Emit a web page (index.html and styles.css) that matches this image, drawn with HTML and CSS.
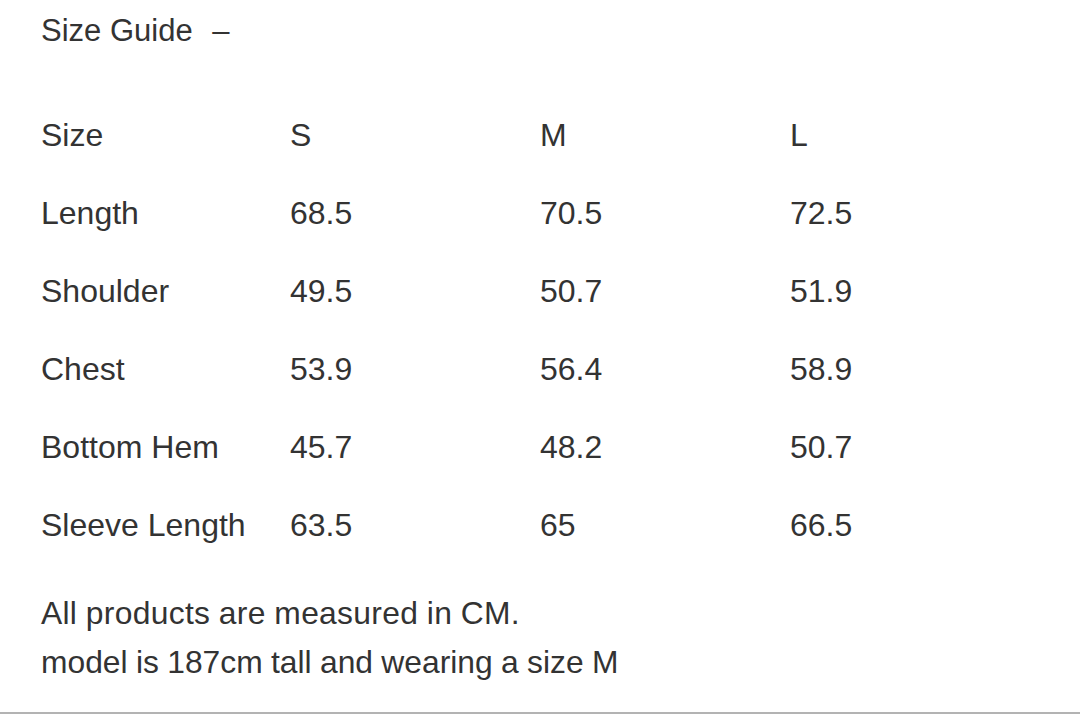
FILE: index.html
```html
<!DOCTYPE html>
<html>
<head>
<meta charset="utf-8">
<link rel="stylesheet" href="styles.css">
</head>
<body>
<div class="page">
  <div class="title">Size Guide <span class="dash">–</span></div>
  <div class="table">
    <div class="row"><span>Size</span><span>S</span><span>M</span><span>L</span></div>
    <div class="row"><span>Length</span><span>68.5</span><span>70.5</span><span>72.5</span></div>
    <div class="row"><span>Shoulder</span><span>49.5</span><span>50.7</span><span>51.9</span></div>
    <div class="row"><span>Chest</span><span>53.9</span><span>56.4</span><span>58.9</span></div>
    <div class="row"><span>Bottom Hem</span><span>45.7</span><span>48.2</span><span>50.7</span></div>
    <div class="row"><span>Sleeve Length</span><span>63.5</span><span>65</span><span>66.5</span></div>
  </div>
  <div class="note">
    <p>All products are measured in CM.</p>
    <p>model is 187cm tall and wearing a size M</p>
  </div>
</div>
</body>
</html>
```
FILE: styles.css
```css
html, body {
  margin: 0;
  padding: 0;
  background: #ffffff;
}
.page {
  width: 1080px;
  height: 714px;
  box-sizing: border-box;
  padding: 13px 0 0 41px;
  border-bottom: 2px solid #b3b3b3;
  color: #333333;
  font-family: "Liberation Sans", Arial, sans-serif;
  overflow: hidden;
}
.title {
  font-size: 31px;
  line-height: 36px;
  height: 36px;
}
.dash {
  margin-left: 11px;
}
.table {
  margin-top: 47px;
  font-size: 32px;
}
.row {
  display: grid;
  grid-template-columns: 249px 250px 250px auto;
  height: 78px;
  line-height: 78px;
}
.note {
  margin-top: 25px;
  font-size: 31.8px;
  word-spacing: -0.5px;
}
.note p {
  margin: 0;
  line-height: 49px;
}
.note p:first-child {
  letter-spacing: 0.3px;
}
```
